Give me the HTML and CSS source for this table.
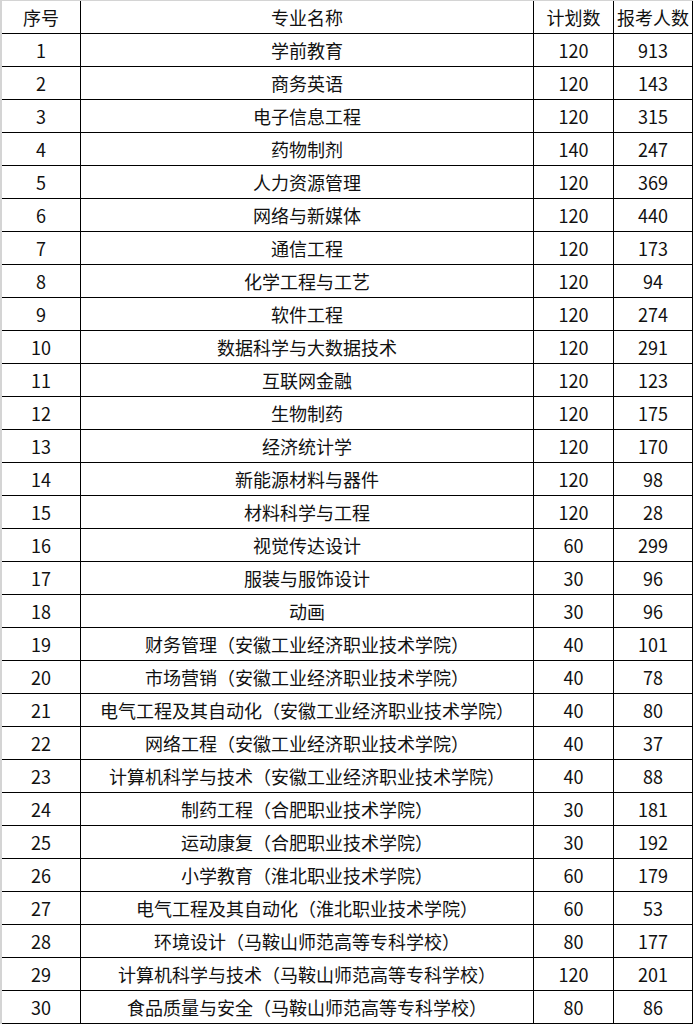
FILE: index.html
```html
<!DOCTYPE html>
<html lang="zh-CN">
<head>
<meta charset="utf-8">
<title>专业报考人数</title>
<link rel="stylesheet" href="styles.css">
</head>
<body>
<div class="sheet">
  <div class="row head"><div class="c c1">序号</div><div class="c c2">专业名称</div><div class="c c3">计划数</div><div class="c c4">报考人数</div></div>
  <div class="row"><div class="c c1">1</div><div class="c c2">学前教育</div><div class="c c3">120</div><div class="c c4">913</div></div>
  <div class="row"><div class="c c1">2</div><div class="c c2">商务英语</div><div class="c c3">120</div><div class="c c4">143</div></div>
  <div class="row"><div class="c c1">3</div><div class="c c2">电子信息工程</div><div class="c c3">120</div><div class="c c4">315</div></div>
  <div class="row"><div class="c c1">4</div><div class="c c2">药物制剂</div><div class="c c3">140</div><div class="c c4">247</div></div>
  <div class="row"><div class="c c1">5</div><div class="c c2">人力资源管理</div><div class="c c3">120</div><div class="c c4">369</div></div>
  <div class="row"><div class="c c1">6</div><div class="c c2">网络与新媒体</div><div class="c c3">120</div><div class="c c4">440</div></div>
  <div class="row"><div class="c c1">7</div><div class="c c2">通信工程</div><div class="c c3">120</div><div class="c c4">173</div></div>
  <div class="row"><div class="c c1">8</div><div class="c c2">化学工程与工艺</div><div class="c c3">120</div><div class="c c4">94</div></div>
  <div class="row"><div class="c c1">9</div><div class="c c2">软件工程</div><div class="c c3">120</div><div class="c c4">274</div></div>
  <div class="row"><div class="c c1">10</div><div class="c c2">数据科学与大数据技术</div><div class="c c3">120</div><div class="c c4">291</div></div>
  <div class="row"><div class="c c1">11</div><div class="c c2">互联网金融</div><div class="c c3">120</div><div class="c c4">123</div></div>
  <div class="row"><div class="c c1">12</div><div class="c c2">生物制药</div><div class="c c3">120</div><div class="c c4">175</div></div>
  <div class="row"><div class="c c1">13</div><div class="c c2">经济统计学</div><div class="c c3">120</div><div class="c c4">170</div></div>
  <div class="row"><div class="c c1">14</div><div class="c c2">新能源材料与器件</div><div class="c c3">120</div><div class="c c4">98</div></div>
  <div class="row"><div class="c c1">15</div><div class="c c2">材料科学与工程</div><div class="c c3">120</div><div class="c c4">28</div></div>
  <div class="row"><div class="c c1">16</div><div class="c c2">视觉传达设计</div><div class="c c3">60</div><div class="c c4">299</div></div>
  <div class="row"><div class="c c1">17</div><div class="c c2">服装与服饰设计</div><div class="c c3">30</div><div class="c c4">96</div></div>
  <div class="row"><div class="c c1">18</div><div class="c c2">动画</div><div class="c c3">30</div><div class="c c4">96</div></div>
  <div class="row"><div class="c c1">19</div><div class="c c2">财务管理（安徽工业经济职业技术学院）</div><div class="c c3">40</div><div class="c c4">101</div></div>
  <div class="row"><div class="c c1">20</div><div class="c c2">市场营销（安徽工业经济职业技术学院）</div><div class="c c3">40</div><div class="c c4">78</div></div>
  <div class="row"><div class="c c1">21</div><div class="c c2">电气工程及其自动化（安徽工业经济职业技术学院）</div><div class="c c3">40</div><div class="c c4">80</div></div>
  <div class="row"><div class="c c1">22</div><div class="c c2">网络工程（安徽工业经济职业技术学院）</div><div class="c c3">40</div><div class="c c4">37</div></div>
  <div class="row"><div class="c c1">23</div><div class="c c2">计算机科学与技术（安徽工业经济职业技术学院）</div><div class="c c3">40</div><div class="c c4">88</div></div>
  <div class="row"><div class="c c1">24</div><div class="c c2">制药工程（合肥职业技术学院）</div><div class="c c3">30</div><div class="c c4">181</div></div>
  <div class="row"><div class="c c1">25</div><div class="c c2">运动康复（合肥职业技术学院）</div><div class="c c3">30</div><div class="c c4">192</div></div>
  <div class="row"><div class="c c1">26</div><div class="c c2">小学教育（淮北职业技术学院）</div><div class="c c3">60</div><div class="c c4">179</div></div>
  <div class="row"><div class="c c1">27</div><div class="c c2">电气工程及其自动化（淮北职业技术学院）</div><div class="c c3">60</div><div class="c c4">53</div></div>
  <div class="row"><div class="c c1">28</div><div class="c c2">环境设计（马鞍山师范高等专科学校）</div><div class="c c3">80</div><div class="c c4">177</div></div>
  <div class="row"><div class="c c1">29</div><div class="c c2">计算机科学与技术（马鞍山师范高等专科学校）</div><div class="c c3">120</div><div class="c c4">201</div></div>
  <div class="row"><div class="c c1">30</div><div class="c c2">食品质量与安全（马鞍山师范高等专科学校）</div><div class="c c3">80</div><div class="c c4">86</div></div>
</div>
</body>
</html>
```

FILE: styles.css
```css
html, body {
  margin: 0;
  padding: 0;
  background: #ffffff;
}
.sheet {
  width: 693px;
  box-sizing: border-box;
  padding-top: 1px;
  border-left: 2px solid #d4d4d4;
  background: #ffffff;
  box-shadow: inset 0 1px 0 #d4d4d4;
  font-family: "Noto Sans CJK SC", "Noto Sans", sans-serif;
  font-size: 18px;
  color: #111111;
}
.row {
  display: flex;
  height: 33px;
  box-sizing: border-box;
  border-bottom: 1px solid #000000;
}
.c {
  box-sizing: border-box;
  border-right: 1px solid #000000;
  display: flex;
  align-items: center;
  justify-content: center;
  white-space: nowrap;
  line-height: 1;
}
.c1 { width: 79px; }
.c2 { width: 453px; }
.c3 { width: 80px; }
.c4 { width: 79px; }
```
